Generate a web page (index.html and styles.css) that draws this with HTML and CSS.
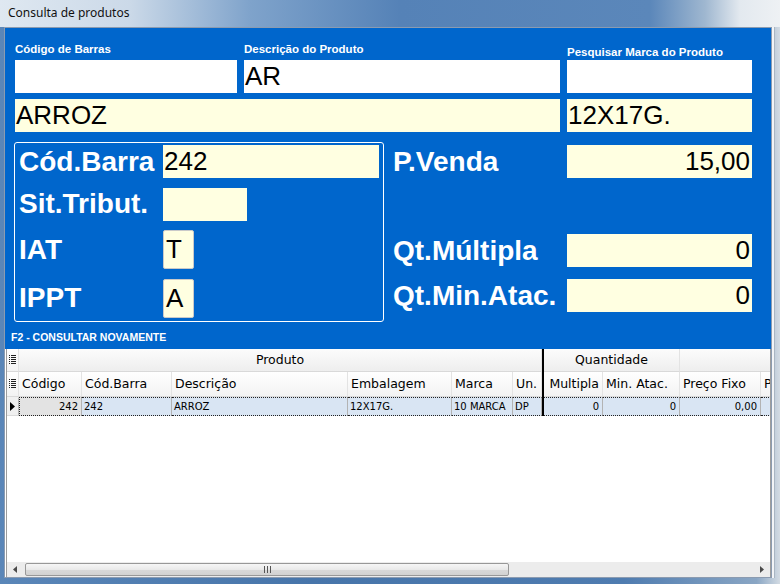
FILE: index.html
```html
<!DOCTYPE html>
<html lang="pt-BR">
<head>
  <meta charset="UTF-8" />
  <title>Consulta de produtos</title>
  <link rel="stylesheet" href="styles.css">
</head>
<body>

<div class="window">
  <div class="titlebar">Consulta de produtos</div>

  <div class="client">
    <div class="panel">
      <div class="top-fields">
        <label class="cap">Código de Barras</label>
        <label class="cap">Descrição do Produto</label>
        <label class="cap cap-low">Pesquisar Marca do Produto</label>
        <div class="edit"></div>
        <div class="edit">AR</div>
        <div class="edit"></div>
        <div class="edit info wide">ARROZ</div>
        <div class="edit info">12X17G.</div>
      </div>

      <div class="lower">
        <div class="groupbox">
          <span class="big">Cód.Barra</span>
          <div class="edit info">242</div>
          <span class="big">Sit.Tribut.</span>
          <div class="edit info sit"></div>
          <span class="big">IAT</span>
          <div class="edit info small">T</div>
          <span class="big">IPPT</span>
          <div class="edit info small">A</div>
        </div>

        <div class="prices">
          <div class="price-row">
            <span class="big">P.Venda</span>
            <div class="edit info num">15,00</div>
          </div>
          <div class="price-row spaced">
            <span class="big">Qt.Múltipla</span>
            <div class="edit info num">0</div>
          </div>
          <div class="price-row">
            <span class="big">Qt.Min.Atac.</span>
            <div class="edit info num">0</div>
          </div>
        </div>
      </div>

      <div class="hint">F2 - CONSULTAR NOVAMENTE</div>
    </div>

    <div class="dbgrid">
      <div class="split"></div>

      <!-- header band -->
      <div class="hc ind"><svg width="7" height="9"><g fill="#222"><rect x="0" y="0" width="1" height="1"/><rect x="2" y="0" width="5" height="1"/><rect x="0" y="2" width="1" height="1"/><rect x="2" y="2" width="5" height="1"/><rect x="0" y="4" width="1" height="1"/><rect x="2" y="4" width="5" height="1"/><rect x="0" y="6" width="1" height="1"/><rect x="2" y="6" width="5" height="1"/><rect x="0" y="8" width="1" height="1"/><rect x="2" y="8" width="5" height="1"/></g></svg></div>
      <div class="hc band span6">Produto</div>
      <div class="hc band span2">Quantidade</div>
      <div class="hc band span2"></div>

      <!-- column titles -->
      <div class="hc ind"><svg width="7" height="9"><g fill="#222"><rect x="0" y="0" width="1" height="1"/><rect x="2" y="0" width="5" height="1"/><rect x="0" y="2" width="1" height="1"/><rect x="2" y="2" width="5" height="1"/><rect x="0" y="4" width="1" height="1"/><rect x="2" y="4" width="5" height="1"/><rect x="0" y="6" width="1" height="1"/><rect x="2" y="6" width="5" height="1"/><rect x="0" y="8" width="1" height="1"/><rect x="2" y="8" width="5" height="1"/></g></svg></div>
      <div class="hc">Código</div>
      <div class="hc">Cód.Barra</div>
      <div class="hc">Descrição</div>
      <div class="hc">Embalagem</div>
      <div class="hc">Marca</div>
      <div class="hc">Un.</div>
      <div class="hc right">Multipla</div>
      <div class="hc">Min. Atac.</div>
      <div class="hc">Preço Fixo</div>
      <div class="hc">P</div>

      <!-- data -->
      <div class="dc ind"><svg width="5" height="9"><polygon points="0,0 5,4.5 0,9" fill="#000"/></svg></div>
      <div class="dc num key">242</div>
      <div class="dc">242</div>
      <div class="dc">ARROZ</div>
      <div class="dc">12X17G.</div>
      <div class="dc">10 MARCA</div>
      <div class="dc">DP</div>
      <div class="dc num">0</div>
      <div class="dc num">0</div>
      <div class="dc num">0,00</div>
      <div class="dc"></div>
    </div>

    <div class="hscroll">
      <div class="sbtn"><svg width="4" height="7"><polygon points="4,0 0,3.5 4,7" fill="#4a4a4a"/></svg></div>
      <div class="thumb"><svg width="7" height="7"><g fill="#555"><rect x="0" y="0" width="1" height="7"/><rect x="3" y="0" width="1" height="7"/><rect x="6" y="0" width="1" height="7"/></g></svg></div>
      <div class="track"></div>
      <div class="sbtn"><svg width="4" height="7"><polygon points="0,0 4,3.5 0,7" fill="#4a4a4a"/></svg></div>
    </div>
  </div>
</div>

</body>
</html>
```

FILE: styles.css
```css
body {
  margin: 0;
  font-family: 'Liberation Sans', Arial, sans-serif;
}

.window {
  width: 780px;
  height: 584px;
  box-sizing: border-box;
  padding: 0 8px 6px 4px;
  display: flex;
  flex-direction: column;
  background: linear-gradient(90deg, #5a86b8 0, #4775aa 40%, #4f7cb0 80%, #8aa6c4 97%, #d3dbe3 100%);
}

.titlebar {
  height: 27px;
  line-height: 26px;
  margin: 0 -8px 0 -4px;
  padding-left: 8px;
  font-family: 'Noto Sans', 'Open Sans', sans-serif;
  font-size: 12px;
  color: #111;
  background: linear-gradient(90deg, #dfe8f1 0, #cbd9e8 130px, #7fa3cb 250px, #5582b7 400px, #5b87ba 650px, #9fb7d0 705px, #e3e9ef 740px, #eef1f4 780px);
}

.client {
  flex: 1;
  display: flex;
  flex-direction: column;
  border: 1px solid #8b9bb0;
  background: #fff;
  box-shadow: 2px 0 0 #f2f4f7, 3px 0 0 #a9b5c2;
}

/* blue form area */
.panel {
  background: #0066cc;
  padding: 14px 0 5px 0;
}

.top-fields {
  display: grid;
  grid-template-columns: 222px 316px 185px;
  grid-template-rows: 18px 39px 33px;
  column-gap: 7px;
  padding: 0 19px 0 10px;
}

.top-fields .edit {
  align-self: start;
}

.top-fields .edit.wide {
  grid-column: span 2;
}

.cap {
  font-weight: bold;
  font-size: 11.5px;
  line-height: 14px;
  color: #fff;
  white-space: nowrap;
}

.cap-low {
  padding-top: 3px;
}

.edit {
  height: 33px;
  line-height: 33px;
  padding: 0 2px 0 1px;
  background: #fff;
  color: #000;
  font-size: 26px;
  white-space: nowrap;
  overflow: hidden;
  box-sizing: border-box;
}

.edit.info {
  background: #ffffe1;
}

.edit.num {
  text-align: right;
}

.lower {
  display: flex;
  gap: 9px;
  margin-top: 10px;
  padding: 0 19px 0 9px;
}

.groupbox {
  width: 370px;
  box-sizing: border-box;
  border: 1px solid #fff;
  border-radius: 3px;
  padding: 2px 4px 3px 4px;
  display: grid;
  grid-template-columns: 144px 216px;
  grid-template-rows: 33px 33px 39px 39px;
  row-gap: 9.5px;
  align-items: center;
}

.big {
  font-weight: bold;
  font-size: 28px;
  line-height: 1;
  color: #fff;
  white-space: nowrap;
}

.edit.sit {
  width: 84px;
}

.edit.small {
  width: 31px;
  height: 39px;
  line-height: 37px;
  border: 1px solid #c9c9c9;
  border-radius: 2px;
  padding-left: 2px;
}

.prices {
  width: 359px;
  padding-top: 3px;
  display: flex;
  flex-direction: column;
  gap: 12px;
}

.price-row {
  display: grid;
  grid-template-columns: 174px 185px;
  align-items: center;
  height: 33px;
}

.price-row.spaced {
  margin-top: 44px;
}

.hint {
  margin-top: 8px;
  padding-left: 6px;
  font-weight: bold;
  font-size: 10.5px;
  line-height: 14px;
  color: #fff;
}

/* data grid */
.dbgrid {
  flex: 1;
  margin-left: 1px;
  border-left: 1px solid #9d9d9d;
  border-right: 1px solid #9d9d9d;
  background: #fff;
  overflow: hidden;
  display: grid;
  grid-template-columns: 12px 63px 90px 176px 104px 61px 29px 2px 59px 77px 81px 60px;
  grid-template-rows: 23px 25px 19px;
  align-content: start;
}

.split {
  grid-column: 8;
  grid-row: 1 / 4;
  background: #000;
}

.hc {
  display: flex;
  align-items: center;
  padding: 0 3px;
  font-family: 'DejaVu Sans', Verdana, sans-serif;
  font-size: 12.5px;
  color: #000;
  white-space: nowrap;
  overflow: hidden;
  border-right: 1px solid #e3e3e3;
  border-bottom: 1px solid #d9d9d9;
  background: linear-gradient(#ffffff, #f3f3f3);
}

.hc.ind {
  padding: 0 0 0 2px;
}

.hc.band {
  justify-content: center;
  background: linear-gradient(#fcfcfc, #eeeeee);
}

.hc.right {
  justify-content: flex-end;
}

.span6 {
  grid-column: span 6;
}

.span2 {
  grid-column: span 2;
}

.dc {
  display: flex;
  align-items: center;
  padding: 0 2px;
  font-family: 'DejaVu Sans', Verdana, sans-serif;
  font-size: 10px;
  color: #000;
  white-space: nowrap;
  overflow: hidden;
  background: #d9e5f3;
  border-right: 1px solid #b3b3b3;
  border-top: 1px dotted #222;
  border-bottom: 1px dotted #222;
}

.dc.ind {
  background: #f0f0f0;
  border-top: 1px solid #f0f0f0;
  border-bottom: 1px solid #dadada;
  padding-left: 3px;
}

.dc.num {
  justify-content: flex-end;
  padding-right: 3px;
}

.dc.key {
  background: #e3e3e3;
  border-left: 1px dotted #222;
}

/* horizontal scrollbar */
.hscroll {
  height: 15px;
  margin-left: 1px;
  display: flex;
  align-items: center;
  background: #ececec;
  border-left: 1px solid #9d9d9d;
  border-right: 1px solid #9d9d9d;
}

.sbtn {
  width: 16px;
  height: 15px;
  display: flex;
  align-items: center;
  justify-content: center;
}

.thumb {
  width: 484px;
  height: 13px;
  margin-left: 2px;
  box-sizing: border-box;
  border: 1px solid #989898;
  border-radius: 2px;
  background: linear-gradient(#f6f6f6, #e9e9e9 50%, #d9d9d9 51%, #d2d2d2);
  display: flex;
  align-items: center;
  justify-content: center;
}

.track {
  flex: 1;
}
```
